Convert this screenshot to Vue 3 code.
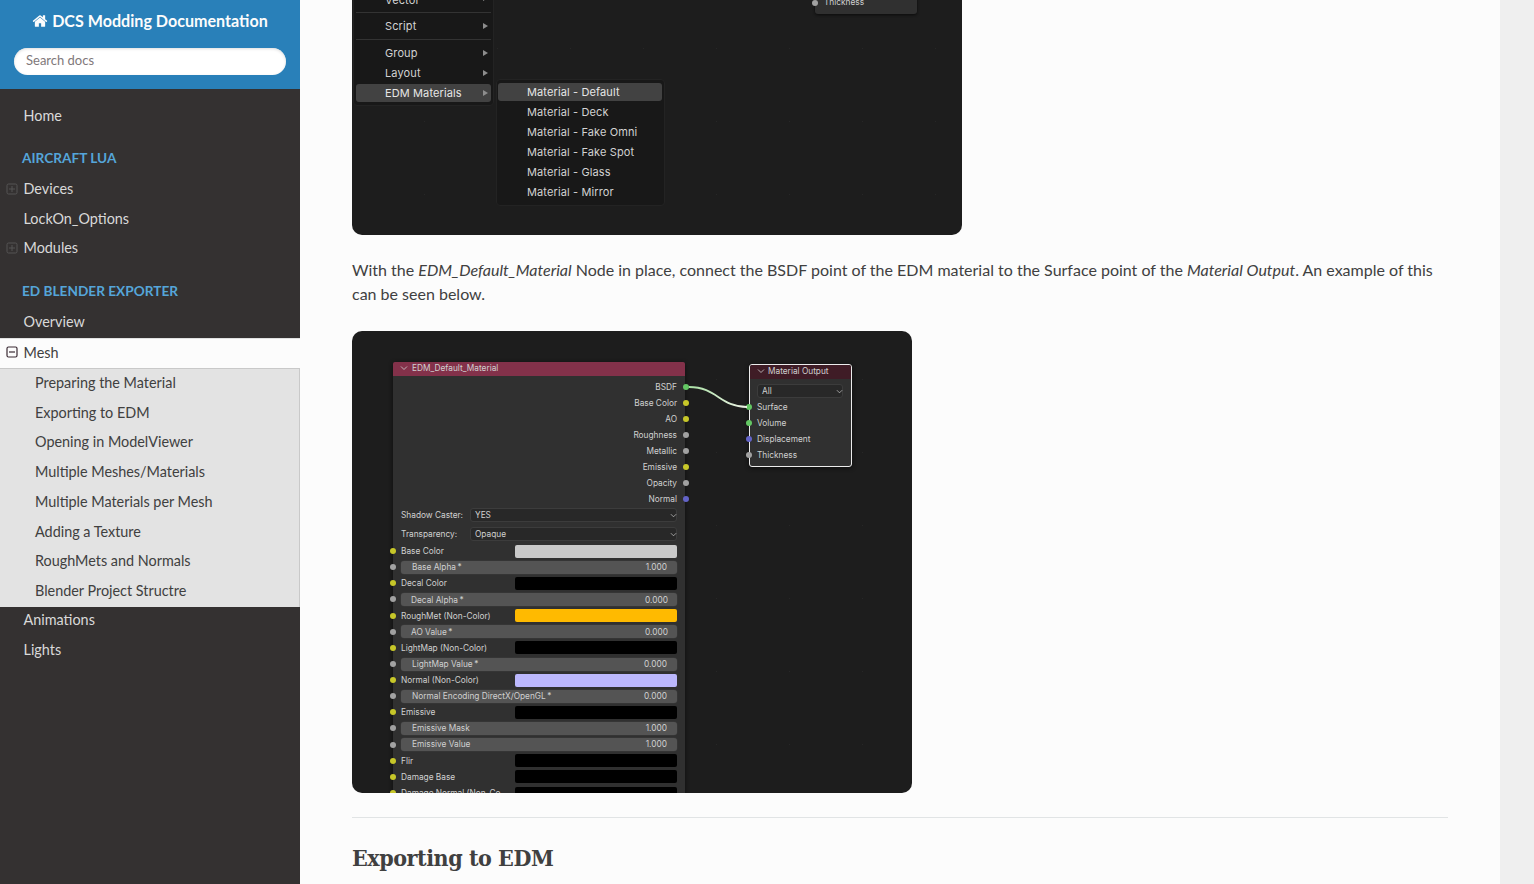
<template>
  <div class="page">
    <nav class="sidebar">
      <div class="side-head">
        <a class="brand">
          <svg class="home-icon" viewBox="0 0 1792 1792"><path d="M1472 992v480q0 26-19 45t-45 19h-384v-384h-256v384h-384q-26 0-45-19t-19-45v-480q0-1 .5-3t.5-3l575-474 575 474q1 2 1 6zm223-69l-62 74q-8 9-21 11h-3q-13 0-21-7l-692-577-692 577q-12 8-24 7-13-2-21-11l-62-74q-8-10-7-23.5t11-21.5l719-599q32-26 76-26t76 26l244 204v-195q0-14 9-23t23-9h192q14 0 23 9t9 23v408l219 182q10 8 11 21.5t-7 23.5z" fill="#fcfcfc"/></svg>
          DCS Modding Documentation
        </a>
        <div class="search">Search docs</div>
      </div>
      <div class="side-menu">
        <a class="item first">Home</a>
        <p class="caption">AIRCRAFT LUA</p>
        <a class="item">
          <svg class="toggle" viewBox="0 0 12 12"><rect x="1" y="1" width="10" height="10" rx="1.5"/><path d="M3 6h6M6 3v6"/></svg>
          Devices
        </a>
        <a class="item">LockOn_Options</a>
        <a class="item">
          <svg class="toggle" viewBox="0 0 12 12"><rect x="1" y="1" width="10" height="10" rx="1.5"/><path d="M3 6h6M6 3v6"/></svg>
          Modules
        </a>
        <p class="caption second">ED BLENDER EXPORTER</p>
        <a class="item">Overview</a>
        <a class="item current">
          <svg class="toggle dark" viewBox="0 0 12 12"><rect x="1" y="1" width="10" height="10" rx="1.5"/><path d="M3 6h6"/></svg>
          Mesh
        </a>
        <ul class="sub-list">
          <li v-for="name in meshPages" :key="name">{{ name }}</li>
        </ul>
        <a class="item">Animations</a>
        <a class="item">Lights</a>
      </div>
    </nav>

    <main class="content">
      <div class="shot shot-menu">
        <div class="menu main-menu">
          <div class="menu-row cut">Vector<i class="arrow"></i></div>
          <div class="menu-sep"></div>
          <div class="menu-row">Script<i class="arrow"></i></div>
          <div class="menu-sep"></div>
          <div class="menu-row">Group<i class="arrow"></i></div>
          <div class="menu-row">Layout<i class="arrow"></i></div>
          <div class="menu-row active">EDM Materials<i class="arrow"></i></div>
        </div>
        <div class="menu sub-menu">
          <div v-for="(m, i) in materials" :key="m" class="sub-row" :class="{ active: i === 0 }">{{ m }}</div>
        </div>
        <div class="top-node">
          <span class="socket grey"></span>
          Thickness
        </div>
      </div>

      <p class="para">
        With the <em>EDM_Default_Material</em> Node in place, connect the BSDF point of the EDM material to the Surface point of the <em>Material Output</em>. An example of this can be seen below.
      </p>

      <div class="shot shot-node">
        <div class="node edm">
          <div class="node-head">
            <svg class="chev" viewBox="0 0 8 8"><path d="M1 2.500l3 3 3-3"/></svg>
            EDM_Default_Material
          </div>
          <div class="outputs">
            <div v-for="o in outputs" :key="o.name" class="row out">
              {{ o.name }}
              <span class="socket right" :class="o.color"></span>
            </div>
          </div>
          <div class="pick-row first-pick">
            <span>Shadow Caster:</span>
            <div class="pick">YES<svg class="chev small" viewBox="0 0 8 8"><path d="M1 2.500l3 3 3-3"/></svg></div>
          </div>
          <div class="pick-row">
            <span>Transparency:</span>
            <div class="pick">Opaque<svg class="chev small" viewBox="0 0 8 8"><path d="M1 2.500l3 3 3-3"/></svg></div>
          </div>
          <div class="inputs">
            <div v-for="r in inputs" :key="r.name" class="row in">
              <span class="socket left" :class="r.value ? 'grey' : 'yellow'"></span>
              <div v-if="r.value" class="slider" :class="{ tight: r.tight }">
                <span>{{ r.name }}</span>
                <span>{{ r.value }}</span>
              </div>
              <template v-else>
                <span>{{ r.name }}</span>
                <div class="swatch" :style="{ background: r.color }"></div>
              </template>
            </div>
          </div>
        </div>

        <div class="node output">
          <div class="node-head">
            <svg class="chev" viewBox="0 0 8 8"><path d="M1 2.500l3 3 3-3"/></svg>
            Material Output
          </div>
          <div class="pick all">All<svg class="chev small" viewBox="0 0 8 8"><path d="M1 2.500l3 3 3-3"/></svg></div>
          <div v-for="s in surfaces" :key="s.name" class="row surf">
            <span class="socket edge" :class="s.color"></span>
            {{ s.name }}
          </div>
        </div>

        <svg class="link" width="560" height="462" viewBox="0 0 560 462">
          <defs>
            <linearGradient id="wire" x1="0" x2="1" y1="0" y2="0">
              <stop offset="0" stop-color="#a9e0a4" />
              <stop offset="1" stop-color="#eef2e6" />
            </linearGradient>
          </defs>
          <path d="M337 56C365 56 368 76 395 76" fill="none" stroke="url(#wire)" stroke-width="1.800" />
        </svg>
      </div>

      <hr class="rule" />
      <h2 class="title">Exporting to EDM</h2>
    </main>
  </div>
</template>

<script setup>
const meshPages = [
  'Preparing the Material',
  'Exporting to EDM',
  'Opening in ModelViewer',
  'Multiple Meshes/Materials',
  'Multiple Materials per Mesh',
  'Adding a Texture',
  'RoughMets and Normals',
  'Blender Project Structre',
];

const materials = [
  'Material - Default',
  'Material - Deck',
  'Material - Fake Omni',
  'Material - Fake Spot',
  'Material - Glass',
  'Material - Mirror',
];

const outputs = [
  { name: 'BSDF', color: 'green' },
  { name: 'Base Color', color: 'yellow' },
  { name: 'AO', color: 'yellow' },
  { name: 'Roughness', color: 'grey' },
  { name: 'Metallic', color: 'grey' },
  { name: 'Emissive', color: 'yellow' },
  { name: 'Opacity', color: 'grey' },
  { name: 'Normal', color: 'blue' },
];

const inputs = [
  { name: 'Base Color', color: '#c9c9c9' },
  { name: 'Base Alpha\u2009*', value: '1.000' },
  { name: 'Decal Color', color: '#000' },
  { name: 'Decal Alpha\u2009*', value: '0.000', tight: true },
  { name: 'RoughMet (Non-Color)', color: '#ffba00' },
  { name: 'AO Value\u2009*', value: '0.000', tight: true },
  { name: 'LightMap (Non-Color)', color: '#000' },
  { name: 'LightMap Value\u2009*', value: '0.000' },
  { name: 'Normal (Non-Color)', color: '#bcb8fd' },
  { name: 'Normal Encoding DirectX/OpenGL\u2009*', value: '0.000' },
  { name: 'Emissive', color: '#000' },
  { name: 'Emissive Mask', value: '1.000' },
  { name: 'Emissive Value', value: '1.000' },
  { name: 'Flir', color: '#000' },
  { name: 'Damage Base', color: '#000' },
  { name: 'Damage Normal (Non-Co', color: '#000' },
];

const surfaces = [
  { name: 'Surface', color: 'green' },
  { name: 'Volume', color: 'green' },
  { name: 'Displacement', color: 'blue' },
  { name: 'Thickness', color: 'grey' },
];
</script>

<style>
html,
body {
  margin: 0;
  overflow: hidden;
  background: #efefef;
}
</style>

<style scoped>
.page {
  display: flex;
  height: 884px;
  overflow: hidden;
  font-family: Lato, 'Open Sans', sans-serif;
  color: #404040;
}

.sidebar {
  width: 300px;
  flex: none;
  background: #343131;
}

.side-head {
  height: 89px;
  box-sizing: border-box;
  padding-top: 10px;
  background: #2980b9;
  text-align: center;
}

.brand {
  display: block;
  height: 24px;
  margin-bottom: 14px;
  font-size: 16.1px;
  line-height: 21px;
  font-weight: 700;
  color: #fcfcfc;
}

.home-icon {
  width: 16px;
  height: 16px;
  vertical-align: -2px;
}

.search {
  height: 27px;
  margin: 0 14px;
  padding-left: 12px;
  border-radius: 50px;
  background: #fff;
  box-shadow: inset 0 1px 3px #ddd;
  font-size: 13px;
  line-height: 25px;
  color: #80787a;
  text-align: left;
}

.side-menu {
  padding-top: 12px;
}

.item {
  position: relative;
  display: block;
  height: 29.7px;
  padding-left: 23.500px;
  font-size: 14.4px;
  line-height: 29.7px;
  color: #d9d9d9;
}

.caption {
  height: 18px;
  margin: 18px 0 7.3px;
  padding-left: 22px;
  font-size: 13.65px;
  line-height: 18px;
  font-weight: 700;
  color: #55a5d9;
}

.caption.second {
  margin-top: 18.7px;
}

.current {
  height: 31px;
  box-sizing: border-box;
  margin-top: 1.2px;
  border-top: 1px solid #e1e1e1;
  border-bottom: 1px solid #c9c9c9;
  background: #fcfcfc;
  color: #404040;
  font-weight: 400;
  line-height: 28px;
}

.toggle {
  position: absolute;
  left: 5.500px;
  top: 9px;
  width: 12px;
  height: 12px;
  fill: none;
  stroke: #555;
  stroke-width: 1;
}

.toggle.dark {
  top: 7.500px;
  stroke: #3a2a33;
  stroke-width: 1.200;
}

.sub-list {
  margin: 0 0 -1.7px;
  padding: 0;
  list-style: none;
  background: #e3e3e3;
  border-right: 1px solid #c9c9c9;
}

.sub-list li {
  height: 29.75px;
  padding-left: 35px;
  font-size: 14.4px;
  line-height: 28px;
  color: #404040;
}

.content {
  width: 1200px;
  flex: none;
  box-sizing: border-box;
  padding: 0 52px;
  background: #fcfcfc;
}

.shot {
  position: relative;
  overflow: hidden;
  background-color: #1d1d1d;
  background-image: radial-gradient(circle, #272727 0.8px, transparent 1px);
  background-size: 73px 73px;
  background-position: 36px 12px;
  font-family: Inter, Roboto, sans-serif;
}

.shot-menu {
  width: 610px;
  height: 235px;
  border-radius: 0 0 10px 10px;
}

.menu {
  position: absolute;
  box-sizing: border-box;
  border: 1px solid #232323;
  border-radius: 4px;
  background: #181818;
  font-size: 11px;
  color: #d2d2d2;
}

.main-menu {
  left: 1px;
  top: -13px;
  width: 141px;
  height: 119px;
  padding: 0 2px;
}

.menu-row {
  position: relative;
  height: 20px;
  padding-left: 29px;
  line-height: 20px;
  letter-spacing: 0.12px;
}

.menu-row.cut {
  height: 24px;
  line-height: 24px;
}

.menu-row.active {
  height: 18px;
  margin-top: 1px;
  border-radius: 3px;
  background: #424242;
  color: #e6e6e6;
  line-height: 18px;
}

.arrow {
  position: absolute;
  right: 3px;
  top: 7px;
  border-left: 5px solid #8d8d8d;
  border-top: 3px solid transparent;
  border-bottom: 3px solid transparent;
}

.menu-row.active .arrow {
  top: 6px;
}

.menu-sep {
  height: 1px;
  margin-bottom: 3px;
  background: #333;
}

.menu-row + .menu-sep {
  margin-top: 3px;
}

.menu-row.cut + .menu-sep {
  margin-top: 0;
}

.sub-menu {
  left: 144px;
  top: 79px;
  width: 169px;
  height: 127px;
  padding: 3px 2px 3px 1px;
}

.sub-row {
  height: 20px;
  padding-left: 29px;
  line-height: 18px;
  letter-spacing: 0.12px;
}

.sub-row.active {
  height: 18px;
  margin-bottom: 2px;
  border-radius: 3px;
  background: #424242;
  color: #e6e6e6;
}

.top-node {
  position: absolute;
  left: 463px;
  top: -20px;
  width: 102px;
  height: 34px;
  box-sizing: border-box;
  padding: 16px 0 0 9px;
  border-radius: 0 0 3px 3px;
  background: #303030;
  box-shadow: 0 1px 3px #0b0b0b;
  font-size: 8.3px;
  line-height: 12px;
  color: #d0d0d0;
}

.top-node .socket {
  left: -3px;
  top: 20px;
}

.para {
  margin: 23px 0 25px;
  font-size: 16px;
  line-height: 24px;
}

.shot-node {
  width: 560px;
  height: 462px;
  border-radius: 10px;
}

.node {
  position: absolute;
  box-sizing: border-box;
  background: #303030;
  font-size: 8.3px;
  color: #d0d0d0;
  box-shadow: 0 1px 4px #0d0d0d;
}

.edm {
  left: 41px;
  top: 31px;
  width: 292px;
  height: 500px;
  border-radius: 3px 3px 0 0;
}

.output {
  left: 397px;
  top: 33px;
  width: 103px;
  height: 103px;
  border: 1px solid #ececec;
  border-radius: 3px;
}

.node-head {
  display: flex;
  align-items: center;
  gap: 4px;
  height: 14px;
  box-sizing: border-box;
  padding: 0 0 2px 7px;
  background: #83314a;
  border-radius: 2px 2px 0 0;
}

.output .node-head {
  gap: 3px;
  background: #3f1c26;
}

.chev {
  width: 8px;
  height: 8px;
  flex: none;
  fill: none;
  stroke: #cfcfcf;
  stroke-width: 0.8;
}

.chev.small {
  position: absolute;
  right: -1px;
  top: 3px;
  width: 7px;
  height: 7px;
}

.outputs {
  padding-top: 3px;
}

.row {
  position: relative;
  display: flex;
  align-items: center;
  height: 16px;
  line-height: 16px;
  white-space: nowrap;
}

.out {
  justify-content: flex-end;
  padding-right: 8px;
}

.in {
  height: 16.13px;
  padding: 0 8px;
}

.surf {
  padding-left: 7px;
  top: -1px;
}

.socket {
  position: absolute;
  width: 6px;
  height: 6px;
  border-radius: 50%;
}

.socket.right {
  right: -4px;
  top: 5px;
}

.socket.left {
  left: -3px;
  top: 5px;
}

.socket.edge {
  left: -4px;
  top: 5px;
}

.green {
  background: #63c763;
}

.yellow {
  background: #c7c729;
}

.grey {
  background: #a1a1a1;
}

.blue {
  background: #6363c7;
}

.pick-row {
  display: flex;
  align-items: center;
  height: 19px;
  padding: 0 8px;
}

.first-pick {
  margin-top: -1.500px;
}

.pick-row span {
  width: 68.500px;
  flex: none;
}

.pick {
  position: relative;
  flex: 1;
  height: 14px;
  padding-left: 4.500px;
  border: 1px solid #3c3c3c;
  border-radius: 3px;
  background: #282828;
  line-height: 12px;
  box-sizing: border-box;
}

.all {
  flex: none;
  height: 14px;
  margin: 5px 8px 2px 7px;
  padding-left: 4px;
}

.inputs {
  margin-top: -0.4px;
}

.slider {
  display: flex;
  flex: 1;
  justify-content: space-between;
  height: 13px;
  padding: 0 10px 0 11px;
  border-radius: 3px;
  background: #545454;
  box-shadow: 0 0 0 0.5px #3a3a3a;
  line-height: 12px;
}

.slider.tight {
  padding: 0 9px 0 10px;
  line-height: 14px;
}

.swatch {
  width: 162px;
  height: 13px;
  margin-left: auto;
  border-radius: 2px;
}

.link {
  position: absolute;
  left: 0;
  top: 0;
}

.rule {
  height: 1px;
  margin: 24px 0 0;
  border: 0;
  background: #e1e4e5;
}

.title {
  margin: 25px 0 0;
  font-family: 'DejaVu Serif', serif;
  font-stretch: condensed;
  font-size: 23px;
  line-height: 29px;
  font-weight: 700;
  letter-spacing: -0.45px;
  color: #404040;
}
</style>
